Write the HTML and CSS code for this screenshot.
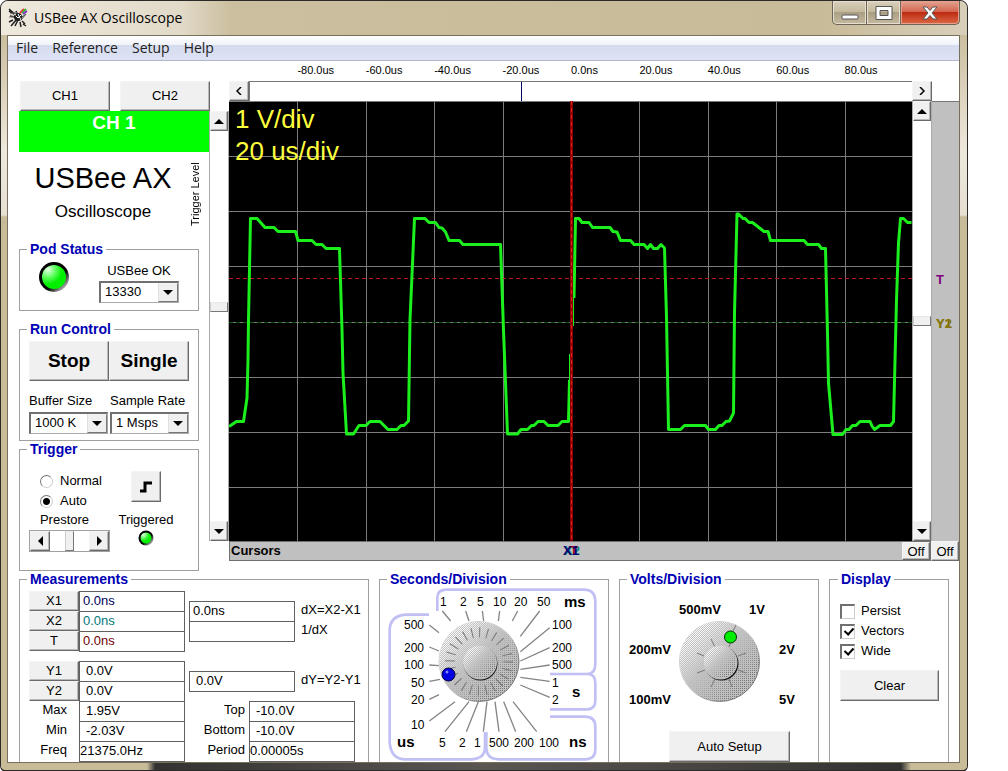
FILE: index.html
```html
<!DOCTYPE html>
<html lang="en">
<head>
<meta charset="utf-8">
<title>USBee AX Oscilloscope</title>
<link rel="stylesheet" href="styles.css">
</head>
<body>
<div class="window">
  <header class="titlebar">
    <svg class="app-icon" viewBox="0 0 20 20" aria-hidden="true">
      <path d="M1 3l5 3M2 8l5 1M1 1l7 6M3 18l6-7M5 12l-4 2M15 16l3 2M14 13l3 3M12 14l1 5M8 3l2 4M10 12l-3 6" stroke="#222" stroke-width="1.5" fill="none"/>
      <path d="M2 6l6-2 3 3M1 9h6" stroke="#777" fill="none"/>
      <circle cx="10" cy="9" r="4" fill="#1c1c1c"/>
      <path d="M8 8l2 2 3-3M6 6l2 1M10 6l3 6" stroke="#fff" fill="none"/>
      <path d="M12 5l4-4" stroke="#e33" stroke-width="2"/>
      <path d="M14 5l4-4" stroke="#3b3" stroke-width="2"/>
      <path d="M15 6l4-3" stroke="#83c" stroke-width="2"/>
      <path d="M14 9l4-3M13 12l5-6" stroke="#444"/>
    </svg>
    <h1 class="title">USBee AX Oscilloscope</h1>
    <div class="caption-buttons">
      <button class="cap cap-min" aria-label="Minimize"><svg width="18" height="14" viewBox="0 0 18 14"><rect x="1" y="9" width="16" height="4" rx="1" fill="#fff" stroke="#555"/></svg></button>
      <button class="cap cap-max" aria-label="Maximize"><svg width="18" height="14" viewBox="0 0 18 14"><path fill="#fff" fill-rule="evenodd" stroke="#555" d="M1 .5h16v13H1zM5 4.500h8v5H5z"/></svg></button>
      <button class="cap cap-close" aria-label="Close"><svg width="16" height="14" viewBox="0 0 16 14"><path d="M1 1h4l3 3.500L11 1h4l-5 6 5 6h-4L8 9.500 5 13H1l5-6z" fill="#fff" stroke="#555"/></svg></button>
    </div>
  </header>

  <div class="client">
    <nav class="menubar">
      <a href="#file">File</a><a href="#reference">Reference</a><a href="#setup">Setup</a><a href="#help">Help</a>
    </nav>

    <main class="workspace">
      <div class="upper">
        <aside class="side">
          <div class="channel-tabs">
            <button class="btn">CH1</button>
            <button class="btn">CH2</button>
          </div>
          <div class="side-body">
            <div class="side-main">
              <div class="channel">CH 1</div>
              <div class="brand">
                <div class="brand-text">
                  <div class="brand-name">USBee AX</div>
                  <div class="brand-sub">Oscilloscope</div>
                </div>
                <div class="vlabel">Trigger Level</div>
              </div>

              <fieldset class="group pod">
                <legend>Pod Status</legend>
                <div class="pod-row">
                  <svg class="led-big" viewBox="0 0 32 32" role="img" aria-label="Pod connected">
                    <defs>
                      <linearGradient id="ring" x1="0" y1="0" x2="1" y2="1"><stop offset=".6" stop-color="#000"/><stop offset=".95" stop-color="#eee"/></linearGradient>
                      <radialGradient id="lamp" cx=".25" cy=".2" r=".6"><stop offset="0" stop-color="#e8ffe8"/><stop offset=".5" stop-color="#6f6"/><stop offset="1" stop-color="#00f000"/></radialGradient>
                    </defs>
                    <circle cx="16" cy="16" r="15" fill="url(#ring)"/>
                    <circle cx="16" cy="16" r="12" fill="url(#lamp)"/>
                  </svg>
                  <div class="field">
                    <label for="pod">USBee OK</label>
                    <div class="combo"><select id="pod"><option>13330</option></select><span class="drop"><i class="tri down"></i></span></div>
                  </div>
                </div>
              </fieldset>

              <fieldset class="group run">
                <legend>Run Control</legend>
                <div class="run-buttons">
                  <button class="btn big">Stop</button>
                  <button class="btn big">Single</button>
                </div>
                <div class="run-fields">
                  <div class="field">
                    <label for="buffer">Buffer Size</label>
                    <div class="combo"><select id="buffer"><option>1000 K</option></select><span class="drop"><i class="tri down"></i></span></div>
                  </div>
                  <div class="field">
                    <label for="rate">Sample Rate</label>
                    <div class="combo"><select id="rate"><option>1 Msps</option></select><span class="drop"><i class="tri down"></i></span></div>
                  </div>
                </div>
              </fieldset>

              <fieldset class="group trig">
                <legend>Trigger</legend>
                <div class="trig-grid">
                  <div class="radios">
                    <label><input type="radio" name="mode"> Normal</label>
                    <label><input type="radio" name="mode" checked> Auto</label>
                  </div>
                  <button class="btn edge" aria-label="Rising edge"><svg width="12" height="12" viewBox="0 0 12 12"><path d="M0 10h5V2h7" fill="none" stroke="#000" stroke-width="3"/></svg></button>
                  <span class="cap-label prestore">Prestore</span>
                  <span class="cap-label">Triggered</span>
                  <div class="scroll horiz">
                    <button class="btn arrow" aria-label="Prestore less"><i class="tri left"></i></button>
                    <span class="gap-a"></span><span class="thumb"></span><span class="gap-a"></span>
                    <button class="btn arrow" aria-label="Prestore more"><i class="tri right"></i></button>
                  </div>
                  <svg class="led-small" viewBox="0 0 32 32" role="img" aria-label="Triggered"><circle cx="16" cy="16" r="15" fill="url(#ring)"/><circle cx="16" cy="16" r="11" fill="url(#lamp)"/></svg>
                </div>
              </fieldset>
            </div>
            <div class="scroll vert trigger-scroll">
              <button class="btn arrow" aria-label="Raise trigger level"><i class="tri up"></i></button>
              <span class="above"></span><span class="thumb"></span><span class="below"></span>
              <button class="btn arrow" aria-label="Lower trigger level"><i class="tri down"></i></button>
            </div>
          </div>
        </aside>

        <section class="scope">
          <div class="timebase">
            <span></span><span>-80.0us</span><span>-60.0us</span><span>-40.0us</span><span>-20.0us</span><span>0.0ns</span><span>20.0us</span><span>40.0us</span><span>60.0us</span><span>80.0us</span>
          </div>
          <div class="pan">
            <button class="btn arrow" aria-label="Pan left"><svg width="6" height="8" viewBox="0 0 6 8"><path d="M5 0L1 4l4 4" fill="none" stroke="#000" stroke-width="1.500"/></svg></button>
            <div class="pan-track"><span class="pan-mark"></span></div>
            <button class="btn arrow" aria-label="Pan right"><svg width="6" height="8" viewBox="0 0 6 8"><path d="M1 0l4 4-4 4" fill="none" stroke="#000" stroke-width="1.500"/></svg></button>
          </div>
          <div class="screen-row">
            <div class="screen">
              <svg class="plot" viewBox="229 101 683 440" preserveAspectRatio="none" role="img" aria-label="Channel 1 waveform">
                <path d="M229 101.500h683M297.500 101v440M366.500 101v440M434.500 101v440M503.500 101v440M639.500 101v440M708.500 101v440M776.500 101v440M845.500 101v440M229 156.500h683M229 211.500h683M229 266.500h683M229 322.500h683M229 377.500h683M229 432.500h683M229 487.500h683" stroke="#7c7c7c" fill="none"/>
                <path d="M229 278.500h683" stroke="#c01818" stroke-dasharray="4 3"/>
                <path d="M229 322.500h683" stroke="#0a5a0a" stroke-dasharray="4 3"/>
                <g fill="none" stroke="#1cf01c" stroke-width="3" stroke-linejoin="round">
                  <polyline points="229,426.500 236.500,421.500 243.500,421.500 247,398 248,360 248.500,320 250.500,218.500 257,218.500 265,227.500 274,227.500 278,231.500 295.500,231.500 298,240.500 312,240.500 316,244.500 322,244.500 326,248.500 339.500,248.500 342,330 343,373 346.500,434 353.500,434 359,425.500 366,425.500 370,421.500 380,421.500 388,429.500 397,429.500 401,425.500 404,425.500 408.500,421 410,320 414.500,218.500 425,218.500 429,222.500 435.500,222.500 439,227.500 442,228 445.500,232 449,240.500 459.500,240.500 463,244.500 500.500,244.500 503.500,330 507.500,434 517.500,434 521,429.500 527.500,429.500 531.500,425.500 534,425.500 538,421.500 544,421.500 548,425.500 558,425.500 562,421.500 568.500,421.500 569.500,380"/>
                  <path d="M569.500 380v-26M573.500 326v-30" stroke-width="1"/>
                  <polyline points="574,298 575.500,218.500 579,218.500 582,222.500 589,222.500 592.500,227.500 610,227.500 613,231.500 617,232 620.500,240.500 630.500,240.500 634,244.500 644,244.500 647.500,248.500 650.500,244.500 653.500,248.500 657.500,248.500 661,244.500 664.500,248 666.500,317 668.500,429.500 680.500,429.500 684.500,425.500 705.500,425.500 708.500,429.500 715.500,429.500 719,425.500 722,425.500 726,421.500 729.500,421 733.500,413 734.500,313 737,214 738.500,214 743,218.500 745,218.500 749,222.500 752.500,222.500 764,231.500 768,231.500 770.500,240.500 804,240.500 807.500,244.500 818.500,244.500 821.500,248.500 825.500,248.500 827.500,333 828.500,383 833,434.500 842.500,434.500 846,429.500 849,429.500 852.500,425.500 856,425.500 860,421.500 870,421.500 872,426 874.500,429.500 880,425.500 890.500,425.500 893.500,421.500 896.500,300 898.500,243 900.500,218.500 903.500,218.500 907.500,222.500 911.500,222.500"/>
                </g>
                <path d="M571.500 101v440" stroke="#8c0000" stroke-width="3"/>
                <path d="M571.500 101v440" stroke="#e02020" stroke-dasharray="4 3"/>
              </svg>
              <div class="readout">1 V/div<br>20 us/div</div>
            </div>
            <div class="scroll vert">
              <button class="btn arrow" aria-label="Move trace up"><i class="tri up"></i></button>
              <span class="half"></span><span class="thumb"></span><span class="half"></span>
              <button class="btn arrow" aria-label="Move trace down"><i class="tri down"></i></button>
            </div>
            <div class="level-rail"><span class="mark mark-t">T</span><span class="mark mark-y1">Y1</span><span class="mark mark-y2">Y2</span></div>
          </div>
          <div class="cursor-row">
            <div class="cursor-bar"><b>Cursors</b><span class="xmark x2">X2</span><span class="xmark xt">T</span><span class="xmark x1">X1</span><button class="btn off">Off</button></div>
            <button class="btn off">Off</button>
          </div>
        </section>
      </div>

      <div class="lower">
        <fieldset class="group measure">
          <legend>Measurements</legend>
          <div class="m-upper">
            <div class="m-left">
              <div class="m-rows">
                <button class="btn">X1</button><input class="val navy" aria-label="X1" value="0.0ns" readonly>
                <button class="btn">X2</button><input class="val teal" aria-label="X2" value="0.0ns" readonly>
                <button class="btn">T</button><input class="val maroon" aria-label="T" value="0.0ns" readonly>
              </div>
              <div class="m-rows">
                <button class="btn">Y1</button><input class="val volt" aria-label="Y1" value="0.0V" readonly>
                <button class="btn">Y2</button><input class="val volt" aria-label="Y2" value="0.0V" readonly>
              </div>
            </div>
            <div class="m-right">
              <div class="d-rows">
                <input class="val" id="dx" value="0.0ns" readonly><label for="dx">dX=X2-X1</label>
                <input class="val" id="idx" value="" readonly><label for="idx">1/dX</label>
              </div>
              <div class="d-rows">
                <input class="val volt" id="dy" value="0.0V" readonly><label for="dy">dY=Y2-Y1</label>
              </div>
            </div>
          </div>
          <div class="m-lower">
            <div class="m-rows stats">
              <label for="max">Max</label><input class="val volt" id="max" value="1.95V" readonly>
              <label for="min">Min</label><input class="val volt" id="min" value="-2.03V" readonly>
              <label for="freq">Freq</label><input class="val flush" id="freq" value="21375.0Hz" readonly>
            </div>
            <div class="m-rows stats">
              <label for="top">Top</label><input class="val volt" id="top" value="-10.0V" readonly>
              <label for="bottom">Bottom</label><input class="val volt" id="bottom" value="-10.0V" readonly>
              <label for="period">Period</label><input class="val flush" id="period" value="0.00005s" readonly>
            </div>
          </div>
        </fieldset>

        <fieldset class="group dial">
          <legend>Seconds/Division</legend>
          <svg class="dial-art" viewBox="380 587 228 175" role="img" aria-label="Seconds per division">
            <defs>
              <pattern id="dots" width="2" height="2" patternUnits="userSpaceOnUse"><rect width="1" height="1" fill="#fff"/><rect x="1" y="1" width="1" height="1" fill="#fff"/></pattern>
              <pattern id="shade" width="2" height="2" patternUnits="userSpaceOnUse"><rect width="1" height="1" fill="#777"/></pattern>
              <linearGradient id="fadeA" x1=".1" y1=".1" x2=".9" y2=".9"><stop offset=".1" stop-color="#fff"/><stop offset=".45" stop-color="#000"/></linearGradient>
              <linearGradient id="fadeB" x1=".1" y1=".1" x2=".9" y2=".9"><stop offset=".45" stop-color="#000"/><stop offset=".85" stop-color="#fff"/></linearGradient>
              <mask id="lit" maskContentUnits="objectBoundingBox"><rect width="1" height="1" fill="url(#fadeA)"/></mask>
              <mask id="dark" maskContentUnits="objectBoundingBox"><rect width="1" height="1" fill="url(#fadeB)"/></mask>
              <linearGradient id="rim" x1="0" y1="0" x2="1" y2="1"><stop offset=".5" stop-color="#ccc"/><stop offset=".8" stop-color="#777"/></linearGradient>
            </defs>
            <g transform="translate(375 565) scale(.333333)" fill="none">
              <path stroke="#c0c0f4" stroke-width="8" d="M187 138v-40q0-24 28-24h412q32 0 34 32v190q0 30-24 31h-112h112q24 0 24 26v54q0 26-26 26h-110M525 455h104q32 0 32 30v68q0 30-30 30H372q-38 0-38-36v-46M162 149H92q-48 4-48 48v336q4 48 44 50h202q40-2 40-36v-46"/>
              <path stroke="#858585" stroke-width="4" d="M202 138l25 30M272 138l10 30M322 138l4 30M374 138l-4 30M428 138l-16 30M494 138l-58 76M524 188l-88 72M524 248l-88 40M524 300l-88 13M524 349l-88-12M524 397l-88-37M163 180l29 23M163 246l29 12M163 300l29 2M163 349l32-6M163 403l29-14M163 468l77-58M210 500l72-90M274 500l36-90M325 500l11-90M372 500l-12-90M422 500l-36-90M485 500l-71-90"/>
            </g>
            <circle cx="479" cy="661.500" r="40" fill="#c0c0c0" stroke="url(#rim)"/>
            <circle cx="479" cy="661.500" r="40" fill="url(#dots)" mask="url(#lit)"/>
            <circle cx="479" cy="661.500" r="40" fill="url(#shade)" mask="url(#dark)"/>
            <circle cx="479" cy="661.500" r="29" fill="none" stroke="#777" stroke-width="10" stroke-dasharray="1 6.590"/>
            <circle cx="480.500" cy="663.500" r="17" fill="#111"/>
            <circle cx="480" cy="662.500" r="17" fill="#c0c0c0"/>
            <circle cx="480" cy="662.500" r="17" fill="url(#dots)" mask="url(#lit)"/>
            <circle cx="480" cy="662.500" r="16" fill="url(#shade)" mask="url(#dark)"/>
            <circle cx="448.500" cy="674.500" r="6.500" fill="#0000e0" stroke="#000040"/>
            <circle cx="447" cy="672" r="1.500" fill="#88f"/>
            <g class="dial-num">
              <text x="440" y="606">1</text><text x="460" y="606">2</text><text x="477" y="606">5</text><text x="493" y="606">10</text><text x="514" y="606">20</text><text x="537" y="606">50</text>
              <text x="404" y="629">500</text><text x="404" y="652">200</text><text x="404" y="669">100</text><text x="411" y="687">50</text><text x="411" y="704">20</text><text x="411" y="729">10</text>
              <text x="552" y="629">100</text><text x="552" y="652">200</text><text x="552" y="669">500</text><text x="552" y="687">1</text><text x="552" y="704">2</text>
              <text x="439" y="747">5</text><text x="459" y="747">2</text><text x="474" y="747">1</text><text x="489" y="747">500</text><text x="514" y="747">200</text><text x="539" y="747">100</text>
            </g>
            <g class="dial-unit"><text x="564" y="607">ms</text><text x="572" y="697">s</text><text x="569" y="747">ns</text><text x="397" y="747">us</text></g>
          </svg>
        </fieldset>

        <fieldset class="group volts">
          <legend>Volts/Division</legend>
          <svg class="dial-art" viewBox="620 587 198 144" role="img" aria-label="Volts per division">
            <circle cx="719.500" cy="661.500" r="40" fill="#c0c0c0" stroke="url(#rim)"/>
            <circle cx="719.500" cy="661.500" r="40" fill="url(#dots)" mask="url(#lit)"/>
            <circle cx="719.500" cy="661.500" r="40" fill="url(#shade)" mask="url(#dark)"/>
            <path d="M711 639l4 8M697 653l7 3M697 673l8-3M711 687l4-8M732 687l-3-8M746 673l-8-3M746 653l-8 3M732 639l-3 8M733 631l3-6" stroke="#777" fill="none"/>
            <circle cx="721.500" cy="663.500" r="17" fill="#111"/>
            <circle cx="720.500" cy="662.500" r="17" fill="#c0c0c0"/>
            <circle cx="720.500" cy="662.500" r="17" fill="url(#dots)" mask="url(#lit)"/>
            <circle cx="720.500" cy="662.500" r="16" fill="url(#shade)" mask="url(#dark)"/>
            <circle cx="730.500" cy="637" r="6" fill="#00ee00" stroke="#030"/>
            <g class="volt-num"><text x="679" y="614">500mV</text><text x="749" y="614">1V</text><text x="629" y="654">200mV</text><text x="779" y="654">2V</text><text x="629" y="704">100mV</text><text x="779" y="704">5V</text></g>
          </svg>
          <button class="btn auto">Auto Setup</button>
        </fieldset>

        <fieldset class="group display">
          <legend>Display</legend>
          <div class="checks">
            <label><input type="checkbox"> Persist</label>
            <label><input type="checkbox" checked> Vectors</label>
            <label><input type="checkbox" checked> Wide</label>
          </div>
          <button class="btn clear">Clear</button>
        </fieldset>
      </div>
    </main>
  </div>
  <div class="frame-bottom"></div>
</div>
</body>
</html>
```
FILE: styles.css
```css
* { box-sizing: border-box; }

body {
  margin: 0;
  background: #fff;
  color: #000;
  font: 13px/16px "Liberation Sans", Arial, sans-serif;
}

button, input, select { font: inherit; color: inherit; }

/* window frame */
.window {
  display: flex;
  flex-direction: column;
  min-height: 100vh;
  margin-right: 40px;
  padding: 0 7px 0 6px;
  border: solid #2c2a28;
  border-width: 1px 1px 2px;
  border-radius: 8px 8px 6px 6px;
  background: linear-gradient(#d2c8b2 0, #cbbe9f 34px, #eee8dc 150px, #e6dfd2 214px, #c8bb98 216px);
  overflow: hidden;
}
.titlebar {
  display: flex;
  align-items: flex-start;
  height: 34px;
  margin: 0 -7px 0 -6px;
  padding: 0 7px 0 6px;
  background: linear-gradient(90deg, #efe9de, #e2dac8 180px, #cbbf9f 230px, #c8bb99 85%, #d8cfba);
}
.app-icon { width: 22px; height: 20px; margin-top: 7px; }
.title {
  flex: 1;
  margin: 7px 0 0 5px;
  font: 14px/20px "Open Sans", "Noto Sans", sans-serif;
}
.caption-buttons { display: flex; height: 24px; }
.cap {
  display: flex;
  align-items: center;
  justify-content: center;
  width: 34px;
  padding: 0;
  border: 1px solid #6d6557;
  border-top: 0;
  border-right-width: 0;
  background: linear-gradient(#d9d0be, #c4b899 50%, #aa9e83 50%, #c5baa0);
  box-shadow: inset 0 0 0 1px #e6dfcf;
}
.cap-min { border-radius: 0 0 0 5px; }
.cap-close {
  width: 60px;
  border-right-width: 1px;
  border-radius: 0 0 5px 0;
  background: linear-gradient(#e2a493, #d3644b 48%, #bd2b12 50%, #dc6a45);
  box-shadow: inset 0 0 0 1px #e8a08c;
}

.client {
  display: flex;
  flex: 1;
  flex-direction: column;
  border: 1px solid #77705f;
  background: #fff;
}
.menubar {
  display: flex;
  gap: 14px;
  height: 25px;
  padding: 0 8px;
  border-bottom: 1px solid #b3b7cc;
  background: linear-gradient(#fff, #f0f3fa 36%, #d6dcef 38%, #dde3f4);
}
.menubar a {
  color: #222;
  font: 14px/24px "Open Sans", "Noto Sans", sans-serif;
  text-decoration: none;
}
.workspace { display: flex; flex: 1; flex-direction: column; }
.upper { display: grid; grid-template-columns: 221px 1fr; height: 510px; }

/* shared controls */
.btn {
  padding: 0;
  border: 1px solid;
  border-color: #f4f4f4 #6a6a6a #6a6a6a #f4f4f4;
  border-radius: 0;
  background: #f0f0f0;
  box-shadow: inset -1px -1px #b8b8b8;
}
.arrow {
  display: flex;
  flex: none;
  align-items: center;
  justify-content: center;
  width: 20px;
  height: 20px;
}
.tri { border: 5px solid transparent; }
.up { border-top-width: 0; border-bottom-color: #000; }
.down { border-bottom-width: 0; border-top-color: #000; }
.left { border-left-width: 0; border-right-color: #000; }
.right { border-right-width: 0; border-left-color: #000; }

.group {
  min-width: 0;
  margin: 0;
  padding: 0 9px;
  border: 1px solid #a0a0a0;
}
.group legend {
  margin-left: -2px;
  padding: 0 3px;
  color: #0000b4;
  font-size: 14px;
  font-weight: bold;
  line-height: 16px;
}
.field label { display: block; white-space: nowrap; }
.combo {
  position: relative;
  height: 22px;
  border: solid;
  border-width: 2px 1px 1px 2px;
  border-color: #707070 #aaa #aaa #707070;
}
.combo select {
  width: 100%;
  height: 100%;
  padding: 0 20px 2px 4px;
  border: 0;
  background: #fff;
  appearance: none;
}
.drop {
  position: absolute;
  top: 0;
  right: 0;
  bottom: 0;
  display: flex;
  align-items: center;
  justify-content: center;
  width: 20px;
  border: 1px solid;
  border-color: #f4f4f4 #777 #777 #e0e0e0;
  background: #f0f0f0;
  pointer-events: none;
}
.scroll { display: flex; background: #fff; }
.scroll .thumb { flex: none; background: #f0f0f0; border: 1px solid; border-color: #e8e8e8 #777 #777 #ccc; }
.vert { flex-direction: column; width: 20px; border-left: 1px solid #aaa; border-right: 1px solid #aaa; }
.vert .arrow { width: auto; }
.vert .thumb { height: 10px; }
.above { flex: 171; }
.below { flex: 209; }
.half { flex: 1; }
.horiz { height: 22px; border: 1px solid #a0a0a0; }
.horiz .thumb { width: 9px; }
.gap-a { flex: 1; }

/* left panel */
.side { padding: 20px 0 0 11px; }
.channel-tabs { display: grid; grid-template-columns: 90px 90px; gap: 10px; height: 30px; padding-left: 1px; }
.side-body { display: flex; }
.side-main { flex: 1; }
.trigger-scroll { height: 430px; }
.channel {
  height: 41px;
  background: #0f0;
  color: #fff;
  font-size: 19px;
  font-weight: bold;
  line-height: 24px;
  text-align: center;
}
.brand { display: flex; height: 89px; }
.brand-text { flex: 1; padding: 10px 0 0 6px; text-align: center; white-space: nowrap; }
.brand-name { font-size: 29px; line-height: 32px; }
.brand-sub { margin-top: 8px; font-size: 17px; line-height: 20px; }
.vlabel {
  width: 28px;
  padding: 15px 7px 0;
  font-size: 11px;
  line-height: 14px;
  writing-mode: vertical-rl;
  transform: rotate(180deg);
}
.side .group { width: 180px; }
.pod { height: 70px; }
.pod-row { display: flex; justify-content: space-between; padding: 4px 10px 0 9px; }
.led-big { width: 32px; height: 32px; }
.pod .field { width: 80px; }
.pod .field label { text-align: center; line-height: 20px; }
.run { height: 120px; margin-top: 10px; }
.run-buttons { display: grid; grid-template-columns: 1fr 1fr; height: 41px; padding-top: 1px; margin-top: 3px; }
.big { font-size: 19px; font-weight: bold; }
.run-fields { display: grid; grid-template-columns: 1fr 1fr; gap: 2px; margin-top: 9px; }
.run-fields label { line-height: 22px; }
.trig { height: 130px; }
.trig-grid {
  display: grid;
  grid-template-columns: 81px 72px;
  grid-template-rows: 53px 20px 22px;
  justify-items: center;
}
.radios { justify-self: start; padding: 14px 0 0 11px; }
.radios label { display: flex; align-items: center; gap: 7px; height: 20px; }
input[type="radio"] {
  width: 13px;
  height: 13px;
  margin: 0;
  border: 1px solid;
  border-color: #777 #ccc #ccc #777;
  border-radius: 50%;
  appearance: none;
}
input[type="radio"]:checked { background: radial-gradient(#000 3px, #fff 4px); }
.edge { display: flex; align-items: center; justify-content: center; width: 30px; height: 31px; margin-top: 14px; }
.cap-label { align-self: center; line-height: 22px; }
.prestore { padding-right: 10px; }
.trig .horiz { width: 81px; }
.led-small { width: 16px; height: 16px; }

/* scope */
.scope { display: flex; flex-direction: column; }
.timebase {
  display: grid;
  grid-template-columns: repeat(10, 1fr);
  height: 20px;
  margin-right: 46px;
  font-size: 11px;
  line-height: 18px;
}
.timebase span { white-space: nowrap; }
.pan { display: flex; height: 20px; margin-right: 27px; }
.pan-track { position: relative; flex: 1; border-top: 1px solid #777; border-left: 1px solid #777; }
.pan-mark { position: absolute; top: 0; bottom: 0; left: 41%; width: 1px; background: #000060; }
.screen-row { display: flex; height: 440px; }
.screen { position: relative; flex: 1; background: #000; }
.plot { display: block; width: 100%; height: 100%; }
.readout { position: absolute; top: 2px; left: 6px; color: #ffff3c; font-size: 26px; line-height: 32px; }
.level-rail { position: relative; width: 27px; border-top: 1px solid #777; background: #c0c0c0; }
.mark { position: absolute; left: 4px; font-weight: bold; line-height: 14px; }
.mark-t { top: 39%; color: #800080; }
.mark-y1 { top: 49%; color: #806000; }
.mark-y2 { top: 49%; color: #857a10; }
.cursor-row { display: flex; height: 20px; background: #c0c0c0; }
.cursor-bar {
  position: relative;
  display: flex;
  flex: 1;
  justify-content: space-between;
  border: 1px solid #707070;
  line-height: 17px;
}
.cursor-bar b { padding-left: 1px; }
.xmark { position: absolute; left: calc(50% - 17px); font-weight: bold; }
.x1 { color: #000070; }
.x2 { padding-left: 1px; color: #008080; }
.xt { padding-left: 7px; color: #a00020; }
.off { width: 28px; line-height: 17px; }

/* lower panels */
.lower {
  display: grid;
  flex: 1;
  grid-template-columns: 350fr 230fr 200fr 120fr;
  gap: 10px;
  height: 190px;
  padding: 0 10px 0 11px;
}
.lower .group { border-bottom: 0; }
.measure { padding: 4px 0 0 9px; }
.m-upper, .m-lower { display: flex; }
.m-left { display: flex; flex-direction: column; gap: 10px; }
.m-rows { display: grid; grid-template-columns: 50px 106px; grid-auto-rows: 20px; }
.m-right { display: flex; flex-direction: column; gap: 30px; padding: 10px 0 0 4px; }
.d-rows { display: grid; grid-template-columns: 106px 1fr; grid-auto-rows: 20px; column-gap: 6px; }
.d-rows label { line-height: 18px; white-space: nowrap; }
.val {
  width: 106px;
  height: 21px;
  padding: 0 3px 2px;
  border: 1px solid #606060;
  background: #fff;
}
.volt { padding-left: 6px; }
.flush { padding-left: 0; }
.navy { color: #000060; }
.teal { color: #007878; }
.maroon { color: #700000; }
.m-lower { gap: 4px; }
.m-lower .m-rows:last-child { grid-template-columns: 60px 106px; }
.stats label { padding-right: 4px; line-height: 18px; text-align: right; }
.stats:first-child label { padding-right: 12px; }
.lower .dial, .lower .volts { padding: 0; }
.dial legend, .volts legend { margin-left: 7px; }
.dial-art { display: block; width: 100%; height: auto; }
.dial-num { font-size: 12px; }
.dial-unit { font-size: 15px; font-weight: bold; }
.volt-num { font-size: 13px; font-weight: bold; }
.auto { display: block; width: 121px; height: 31px; margin: 0 28px 0 auto; }
.display { padding: 0 9px 0 10px; }
.checks { padding-top: 14px; }
.checks label { display: flex; align-items: center; gap: 6px; height: 20px; }
input[type="checkbox"] {
  width: 15px;
  height: 15px;
  margin: 0;
  border: solid;
  border-width: 2px 1px 1px 2px;
  border-color: #707070 #ccc #ccc #707070;
  appearance: none;
}
input[type="checkbox"]:checked::before {
  content: "";
  display: block;
  width: 4px;
  height: 7px;
  margin: 0 0 0 4px;
  border: solid #000;
  border-width: 0 2px 2px 0;
  transform: rotate(42deg);
}
.clear { width: 100%; height: 31px; margin-top: 9px; }
.frame-bottom {
  height: 7px;
  margin: 0 -7px 0 -6px;
  background: linear-gradient(90deg, #c8bb98 146px, #343231 154px, #5a5652 50%, #343231 calc(100% - 66px), #c8bb98 calc(100% - 56px));
}
```
